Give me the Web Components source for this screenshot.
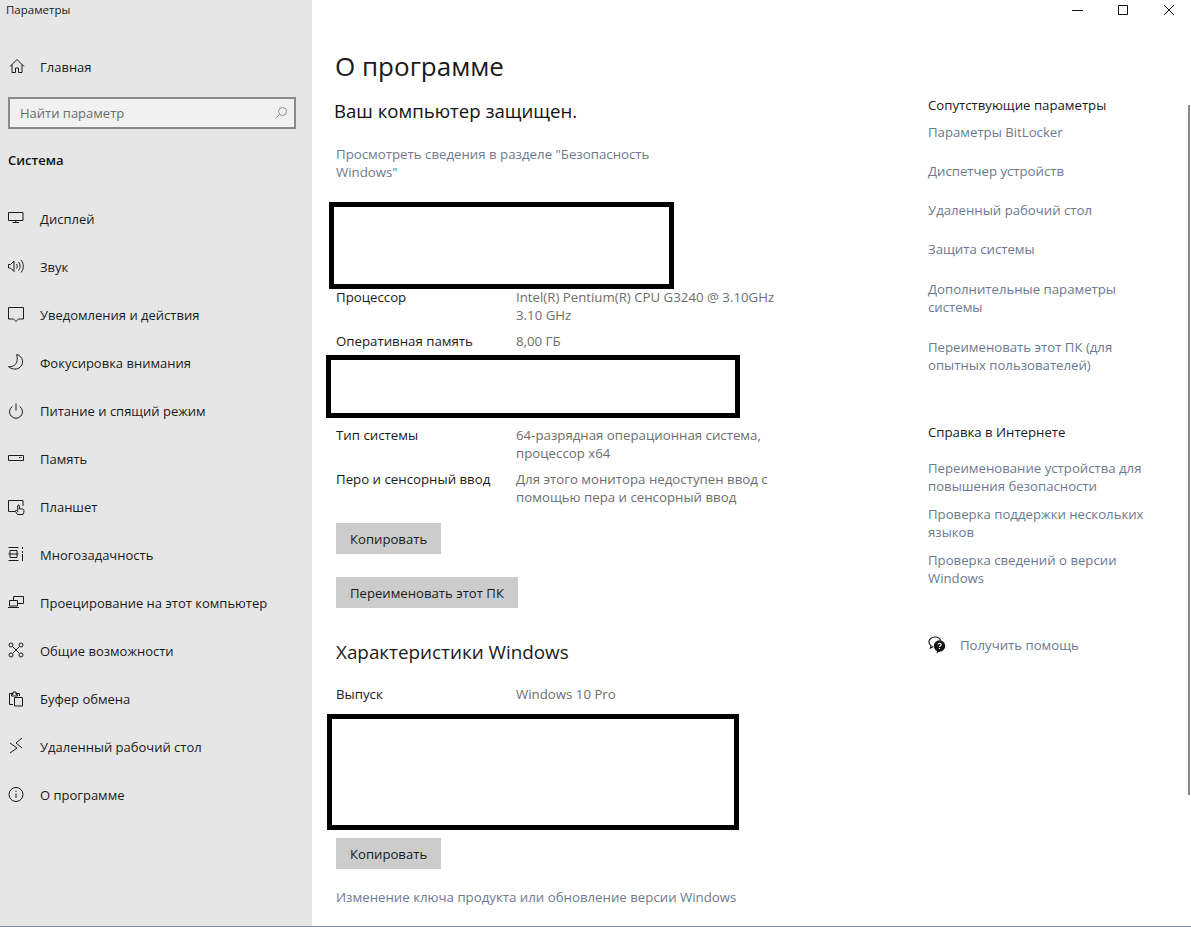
<!DOCTYPE html>
<html lang="ru">
<head>
<meta charset="utf-8">
<title>Параметры</title>
<style>
    html, body { margin: 0; height: 100%; background: #fff; overflow: hidden; }
    body { font-family: "Open Sans", "Noto Sans", "Liberation Sans", sans-serif; }
</style>
</head>
<body>
<settings-window>
    <settings-sidebar slot="aside"></settings-sidebar>
    <about-page slot="main"></about-page>
    <related-panel slot="side"></related-panel>
</settings-window>

<script>
const FONT = `"Open Sans", "Noto Sans", "Liberation Sans", sans-serif`;

// stroke icons of the sidebar, on a 16x16 box
const ICONS = {
    home: `<path d="M2 7.5 9 .5l7 7M4 5.5v8h3.5V9h3v4.500H14v-8"/>`,
    display: `<path d="M.5 1.500h14.500v8H.5zM7.800 9.500v2M4.500 11.500h6.500"/>`,
    sound: `<path d="M.5 5.500h2L6 2v10.500L2.500 9H.5zM8.500 5c1 1.500 1 3 0 4.500M10.500 3c2 2.500 2 6 0 8.500M13 1c3 3.500 3 9 0 12.500"/>`,
    notify: `<path d="M.5.5h15v11.500H10.500L8 14.500 5.500 12H.5z"/>`,
    moon: `<path d="M8.700-.5C15 1 17 9 11 13 8 15 3 14 .5 11.700 6 12 11 9 8.700-.5z"/>`,
    power: `<path d="M8 .5v7M4.500 3.300a6.500 6.500 0 1 0 7 0"/>`,
    memory: `<path d="M.5 4.500h15v5H.5zM11 6.500h1.500M13.500 6.500h.5"/>`,
    tablet: `<path d="M7 12.500H.5v-11h14.500V7M9.500 15.500 7.500 12.500c-.6-1 .7-1.700 1.300-.8l.9 1V6.800c0-1.100 1.700-1.100 1.700 0V10h3c1 0 1.600.7 1.600 1.500 0 1.500-.5 3-1 4z"/>`,
    multitask: `<path d="M.5.5h10M.5 13.500h10M2 3.500h7v7H2zM.5 7h10M14.500 0v2M14.500 4v2M14.500 7v7"/>`,
    project: `<path d="M5.500 5V1.500h10v7H9.500M1.500 5.500h8v5.500h-8zM0 12.500h11"/>`,
    shared: `<circle cx="3" cy="2" r="2"/><circle cx="13" cy="2" r="2"/><circle cx="3" cy="12" r="2"/><circle cx="13" cy="12" r="2"/><path d="M4.500 3.500l7 7M11.500 3.500l-7 7"/>`,
    clipboard: `<path d="M5 13.500H1.500V2.500H5M8 2.500h3.500V5M5 1h3v2.500h1.500V5h-6V3.500H5zM6.500 6.500h8v8.500h-8z"/>`,
    remote: `<path d="M2 4l7 5-7 5M14-1 8 4l6 5"/>`,
    info: `<circle cx="8" cy="7.500" r="7"/><path d="M8 6.500v4.500M8 3.800v1.200"/>`,
};

class SettingsWindow extends HTMLElement {
    constructor() {
        super();
        const shadowRoot = this.attachShadow({ mode: "open" });
        shadowRoot.innerHTML = `
            <style>
                :host {
                    display: grid;
                    grid-template-columns: 312px 616px 263px;
                    width: 1191px;
                    height: 927px;
                    overflow: hidden;
                    position: relative;
                    box-sizing: border-box;
                    border-bottom: 1px solid #7a8a99;
                    font-family: ${FONT};
                }
                .scroll {
                    position: absolute;
                    right: 1px;
                    top: 105px;
                    width: 2px;
                    height: 690px;
                    background: #8c8c8c;
                }
                .controls {
                    position: absolute;
                    top: 0;
                    right: 0;
                    width: 135px;
                    height: 20px;
                }
                svg { position: absolute; fill: none; stroke: #111; stroke-width: 1; }
            </style>
            <slot name="aside"></slot>
            <slot name="main"></slot>
            <slot name="side"></slot>
            <div class="scroll"></div>
            <div class="controls">
                <svg style="left:16px;top:10px" width="11" height="1"><path d="M0 .5h11"/></svg>
                <svg style="left:62px;top:5px" width="10" height="10"><path d="M.5.5h9v9h-9z"/></svg>
                <svg style="left:108px;top:5px" width="10" height="10"><path d="M0 0l10 10M10 0 0 10"/></svg>
            </div>
        `;
    }
}

class SideItem extends HTMLElement {
    constructor() {
        super();
        this.attachShadow({ mode: "open" }).innerHTML = `
            <style>
                :host {
                    display: flex;
                    align-items: center;
                    height: 48px;
                    padding-left: 8px;
                    font-size: 13px;
                    color: #1a1a1a;
                }
                svg { width: 16px; height: 16px; flex: none; margin-right: 16px; fill: none; stroke: #1a1a1a; stroke-width: 1; overflow: visible; }
            </style>
            <svg viewBox="0 0 16 16">${ICONS[this.getAttribute("icon")] || ""}</svg>
            <slot></slot>
        `;
    }
}

class SettingsSidebar extends HTMLElement {
    constructor() {
        super();
        const items = [
            ["display", "Дисплей"],
            ["sound", "Звук"],
            ["notify", "Уведомления и действия"],
            ["moon", "Фокусировка внимания"],
            ["power", "Питание и спящий режим"],
            ["memory", "Память"],
            ["tablet", "Планшет"],
            ["multitask", "Многозадачность"],
            ["project", "Проецирование на этот компьютер"],
            ["shared", "Общие возможности"],
            ["clipboard", "Буфер обмена"],
            ["remote", "Удаленный рабочий стол"],
            ["info", "О программе"],
        ];
        this.attachShadow({ mode: "open" }).innerHTML = `
            <style>
                :host {
                    display: block;
                    height: 926px;
                    background: #e6e6e6;
                    overflow: hidden;
                }
                .title { font-size: 11.5px; line-height: 20px; padding-left: 6px; color: #1a1a1a; }
                .home { margin-top: 23px; }
                .search {
                    display: flex;
                    align-items: center;
                    justify-content: space-between;
                    box-sizing: border-box;
                    width: 288px;
                    height: 32px;
                    margin: 6px 0 0 8px;
                    padding: 0 7px 0 10px;
                    border: 2px solid #8a8a8a;
                    background: #f1f1f1;
                    font-size: 13px;
                    color: #6b6b6b;
                }
                .search svg { width: 12px; height: 12px; fill: none; stroke: #8a8a8a; }
                .group { font-size: 13px; font-weight: 600; padding-left: 8px; margin-top: 21px; line-height: 20px; color: #111; }
                .list { margin-top: 25px; }
            </style>
            <div class="title">Параметры</div>
            <side-item class="home" icon="home">Главная</side-item>
            <div class="search">
                <span>Найти параметр</span>
                <svg viewBox="0 0 12 12"><circle cx="7.500" cy="4.500" r="4"/><path d="M4.500 7.500.5 11.500"/></svg>
            </div>
            <div class="group">Система</div>
            <div class="list">
                ${items.map(([icon, text]) => `<side-item icon="${icon}">${text}</side-item>`).join("")}
            </div>
        `;
    }
}

class InfoRow extends HTMLElement {
    constructor() {
        super();
        this.attachShadow({ mode: "open" }).innerHTML = `
            <style>
                :host {
                    display: grid;
                    grid-template-columns: 180px 266px;
                    font-size: 13.25px;
                    line-height: 18px;
                    color: #1a1a1a;
                    margin-left: 24px;
                }
                .value { color: #6e6e6e; }
            </style>
            <div>${this.getAttribute("label")}</div>
            <div class="value"><slot></slot></div>
        `;
    }
}

class RedactBox extends HTMLElement {
    constructor() {
        super();
        this.attachShadow({ mode: "open" }).innerHTML = `
            <style>
                :host {
                    display: block;
                    box-sizing: border-box;
                    border: 5px solid #000;
                    background: #fff;
                }
            </style>
        `;
    }
}

class FlatButton extends HTMLElement {
    constructor() {
        super();
        this.attachShadow({ mode: "open" }).innerHTML = `
            <style>
                :host {
                    display: block;
                    width: fit-content;
                    margin-left: 24px;
                    padding: 0 14px;
                    height: 31px;
                    line-height: 33px;
                    background: #cccccc;
                    font-size: 13.15px;
                    color: #1a1a1a;
                }
            </style>
            <slot></slot>
        `;
    }
}

class AboutPage extends HTMLElement {
    constructor() {
        super();
        this.attachShadow({ mode: "open" }).innerHTML = `
            <style>
                :host { display: block; height: 925px; overflow: hidden; }
                h1 { font-size: 26px; font-weight: 400; line-height: 36px; margin: 48px 0 0 23px; color: #1a1a1a; }
                h2 { font-size: 18.6px; font-weight: 400; line-height: 24px; margin: 15px 0 0 22px; color: #111; }
                h3 { font-size: 18.85px; font-weight: 400; line-height: 26px; margin: 31px 0 0 24px; color: #1a1a1a; }
                .link { color: #6b7a90; font-size: 13.25px; line-height: 18px; margin-left: 24px; }
                .first { margin-top: 22px; width: 340px; }
            </style>
            <h1>О программе</h1>
            <h2>Ваш компьютер защищен.</h2>
            <div class="link first">Просмотреть сведения в разделе "Безопасность Windows"</div>
            <redact-box style="width:345px;height:87px;margin:21px 0 0 17px"></redact-box>
            <info-row label="Процессор" style="margin-top:-1px">Intel(R) Pentium(R) CPU G3240 @ 3.10GHz 3.10 GHz</info-row>
            <info-row label="Оперативная память" style="margin-top:8px">8,00 ГБ</info-row>
            <redact-box style="width:414px;height:63px;margin:5px 0 0 14px"></redact-box>
            <info-row label="Тип системы" style="margin-top:8px">64-разрядная операционная система, процессор x64</info-row>
            <info-row label="Перо и сенсорный ввод" style="margin-top:8px">Для этого монитора недоступен ввод с помощью пера и сенсорный ввод</info-row>
            <flat-button style="margin-top:17px">Копировать</flat-button>
            <flat-button style="margin-top:23px">Переименовать этот ПК</flat-button>
            <h3>Характеристики Windows</h3>
            <info-row label="Выпуск" style="margin-top:20px">Windows 10 Pro</info-row>
            <redact-box style="width:412px;height:116px;margin:11px 0 0 15px"></redact-box>
            <flat-button style="margin-top:8px">Копировать</flat-button>
            <div class="link" style="margin-top:19px">Изменение ключа продукта или обновление версии Windows</div>
        `;
    }
}

class RelatedPanel extends HTMLElement {
    constructor() {
        super();
        const link = (text, top) => `<div class="link" style="margin-top:${top}px">${text}</div>`;
        this.attachShadow({ mode: "open" }).innerHTML = `
            <style>
                :host { display: block; padding-top: 96px; font-size: 13.2px; line-height: 18px; }
                .head { color: #1a1a1a; }
                .link { color: #6b7a90; width: 225px; }
                .help { display: flex; align-items: center; margin-top: 49px; color: #6b7a90; }
                .help svg { width: 18px; height: 18px; margin-right: 14px; flex: none; }
            </style>
            <div class="head">Сопутствующие параметры</div>
            ${link("Параметры BitLocker", 9)}
            ${link("Диспетчер устройств", 21)}
            ${link("Удаленный рабочий стол", 21)}
            ${link("Защита системы", 21)}
            ${link("Дополнительные параметры системы", 22)}
            ${link("Переименовать этот ПК (для опытных пользователей)", 22)}
            <div class="head" style="margin-top:49px">Справка в Интернете</div>
            ${link("Переименование устройства для повышения безопасности", 18)}
            ${link("Проверка поддержки нескольких языков", 10)}
            ${link("Проверка сведений о версии Windows", 10)}
            <div class="help">
                <svg viewBox="0 0 18 18">
                    <path d="M7 1C3.500 1 1 3 1 6c0 1.700.8 3 2 3.800L2.500 12l2.800-1.500" fill="none" stroke="#111" stroke-width="1.200"/>
                    <path d="M7 1c3 0 5 1.500 5.700 3.500" fill="none" stroke="#111" stroke-width="1.200"/>
                    <circle cx="11.500" cy="10" r="5.700" fill="#111"/>
                    <path d="M9 15l-.5 2.500L12 15z" fill="#111"/>
                    <path d="M9.900 8.500c.2-1.700 3.300-1.700 3.300 0 0 1.300-1.700 1.200-1.700 2.500M11.500 12v1" fill="none" stroke="#fff" stroke-width="1.100"/>
                </svg>
                <span>Получить помощь</span>
            </div>
        `;
    }
}

customElements.define("side-item", SideItem);
customElements.define("info-row", InfoRow);
customElements.define("redact-box", RedactBox);
customElements.define("flat-button", FlatButton);
customElements.define("settings-sidebar", SettingsSidebar);
customElements.define("about-page", AboutPage);
customElements.define("related-panel", RelatedPanel);
customElements.define("settings-window", SettingsWindow);
</script>
</body>
</html>
